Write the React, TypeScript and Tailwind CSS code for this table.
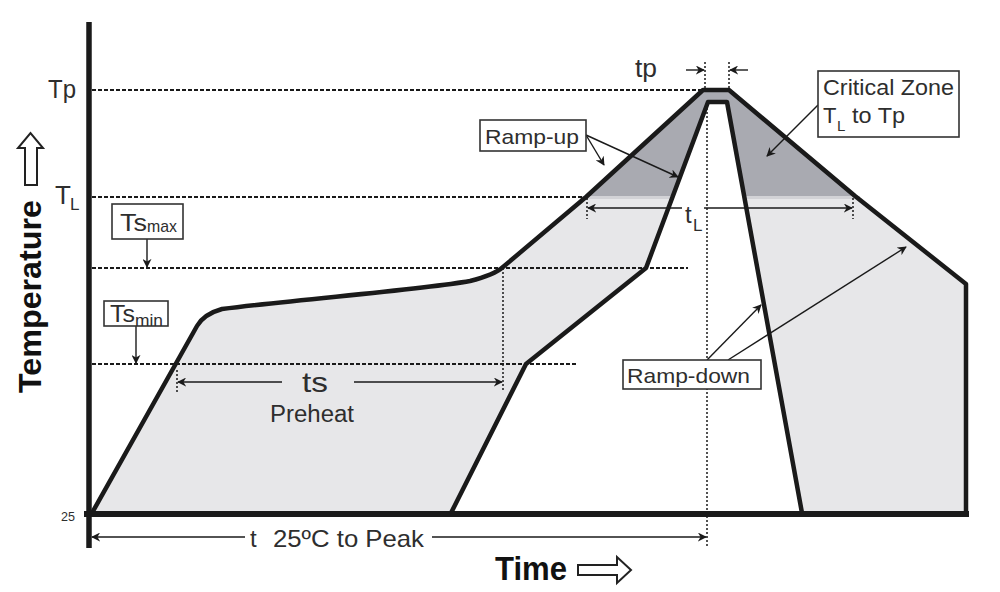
const INK = '#1a1a1a';
const TEXT = '#2e2e2e';
const FONT = '"Liberation Sans", Arial, sans-serif';

type Pt = [number, number];

function Arrow({ from, to }: { from: Pt; to: Pt }) {
  return (
    <line
      x1={from[0]}
      y1={from[1]}
      x2={to[0]}
      y2={to[1]}
      stroke={INK}
      strokeWidth={1.4}
      markerEnd="url(#head)"
    />
  );
}

function Dash({ x1, y1, x2, y2 }: { x1: number; y1: number; x2: number; y2: number }) {
  return <line x1={x1} y1={y1} x2={x2} y2={y2} stroke={INK} strokeWidth={2.2} strokeDasharray="4 2" />;
}

function Dot({ x, y1, y2 }: { x: number; y1: number; y2: number }) {
  return <line x1={x} y1={y1} x2={x} y2={y2} stroke={INK} strokeWidth={1.5} strokeDasharray="2 2" />;
}

function Box({ x, y, w, h }: { x: number; y: number; w: number; h: number }) {
  return <rect x={x} y={y} width={w} height={h} fill="#fff" stroke="#333" strokeWidth={1.6} />;
}

function Label({
  x,
  y,
  size,
  len,
  bold,
  children,
}: {
  x: number;
  y: number;
  size: number;
  len?: number;
  bold?: boolean;
  children: string;
}) {
  return (
    <text
      x={x}
      y={y}
      fontSize={size}
      fontFamily={FONT}
      fontWeight={bold ? 700 : 400}
      fill={bold ? '#111' : TEXT}
      textLength={len}
      lengthAdjust={len ? 'spacingAndGlyphs' : undefined}
    >
      {children}
    </text>
  );
}

const outer =
  'M 92 513 L 197 326 Q 204 314 222 309 C 300 299 420 290 470 281 Q 494 275 503 267 L 586 197 L 703 90 L 729 90 L 855 196 L 966 284 L 966 513 Z';
const outerStroke =
  'M 92 513 L 197 326 Q 204 314 222 309 C 300 299 420 290 470 281 Q 494 275 503 267 L 586 197 L 703 90 L 729 90 L 855 196 L 966 284 L 966 513';
const inner = 'M 451 513 L 526 364 L 646 268 L 708 102 L 727 102 L 802 513 Z';
const innerStroke = 'M 451 513 L 526 364 L 646 268 L 708 102 L 727 102 L 802 513';

export default function App() {
  return (
    <div className="w-[1000px] h-[592px] bg-white overflow-hidden">
      <svg width={1000} height={592} viewBox="0 0 1000 592" className="block">
        <defs>
          <marker id="head" viewBox="0 0 10 10" refX="9" refY="5" markerWidth="9" markerHeight="9" markerUnits="userSpaceOnUse" orient="auto">
            <path d="M0 0 L10 5 L0 10 L3 5 Z" fill={INK} />
          </marker>
          <clipPath id="critical">
            <rect x={0} y={0} width={1000} height={197} />
          </clipPath>
        </defs>

        {/* fills */}
        <path d={outer} fill="#e7e7e9" />
        <path d={outer} fill="#a9aab1" clipPath="url(#critical)" />
        <rect x={580} y={196} width={280} height={3} fill="#d2d2d6" />
        <path d={inner} fill="#fff" />

        {/* reference lines */}
        <Dash x1={92} y1={90} x2={703} y2={90} />
        <Dash x1={92} y1={197} x2={586} y2={197} />
        <Dash x1={92} y1={268} x2={688} y2={268} />
        <Dash x1={92} y1={364} x2={578} y2={364} />

        <Dot x={705} y1={62} y2={90} />
        <Dot x={729} y1={62} y2={90} />
        <Dot x={707} y1={104} y2={548} />
        <Dot x={503} y1={268} y2={390} />
        <Dot x={587} y1={198} y2={219} />
        <Dot x={853} y1={198} y2={219} />
        <Dot x={177} y1={370} y2={392} />

        {/* profile */}
        <path d={outerStroke} fill="none" stroke={INK} strokeWidth={4.5} strokeLinejoin="round" />
        <path d={innerStroke} fill="none" stroke={INK} strokeWidth={4.5} strokeLinejoin="round" />

        {/* axes */}
        <line x1={89} y1={22} x2={89} y2={548} stroke={INK} strokeWidth={5.5} />
        <line x1={84} y1={514} x2={969} y2={514} stroke={INK} strokeWidth={6} />

        {/* dimension arrows */}
        <Arrow from={[147, 239]} to={[147, 267]} />
        <Arrow from={[136, 326]} to={[136, 363]} />
        <Arrow from={[282, 382]} to={[178, 382]} />
        <Arrow from={[354, 382]} to={[502, 382]} />
        <Arrow from={[682, 208]} to={[588, 208]} />
        <Arrow from={[704, 208]} to={[852, 208]} />
        <Arrow from={[245, 537]} to={[92, 537]} />
        <Arrow from={[432, 537]} to={[706, 537]} />
        <Arrow from={[686, 70]} to={[704, 70]} />
        <Arrow from={[748, 70]} to={[730, 70]} />
        <Arrow from={[586, 135]} to={[604, 165]} />
        <Arrow from={[586, 135]} to={[678, 177]} />
        <Arrow from={[818, 105]} to={[767, 156]} />
        <Arrow from={[707, 360]} to={[761, 305]} />
        <Arrow from={[728, 360]} to={[906, 247]} />

        {/* label boxes */}
        <Box x={112} y={204} w={71} h={35} />
        <Box x={104} y={301} w={64} h={25} />
        <Box x={480} y={120} w={106} h={31} />
        <Box x={818} y={71} w={141} h={66} />
        <Box x={623} y={360} w={138} h={29} />

        {/* axis arrows */}
        <path d="M25 185 L25 148 L18 148 L30.5 133 L43 148 L37 148 L37 185 Z" fill="#fff" stroke="#222" strokeWidth={2} />
        <path d="M578 565 L617 565 L617 557 L631 570 L617 583 L617 575 L578 575 Z" fill="#fff" stroke="#222" strokeWidth={2} />

        {/* text */}
        <text
          transform="translate(41 393) rotate(-90)"
          fontSize={32}
          fontWeight={700}
          fontFamily={FONT}
          fill="#111"
          textLength={193}
          lengthAdjust="spacingAndGlyphs"
        >
          Temperature
        </text>
        <Label x={48} y={98} size={26} len={28}>Tp</Label>
        <Label x={55} y={204} size={26}>T</Label>
        <Label x={70} y={210} size={17}>L</Label>
        <Label x={61} y={521} size={13} len={14}>25</Label>

        <Label x={120} y={231} size={24} len={27}>Ts</Label>
        <Label x={147} y={232} size={17} len={30}>max</Label>
        <Label x={110} y={322} size={24} len={25}>Ts</Label>
        <Label x={135} y={326} size={17} len={28}>min</Label>

        <Label x={635} y={77} size={25} len={22}>tp</Label>
        <Label x={485} y={144} size={21} len={94}>Ramp-up</Label>
        <Label x={823} y={95} size={22} len={131}>Critical Zone</Label>
        <Label x={823} y={123} size={22}>T</Label>
        <Label x={837} y={131} size={15}>L</Label>
        <Label x={852} y={123} size={22} len={53}>to Tp</Label>
        <Label x={685} y={223} size={24}>t</Label>
        <Label x={693} y={231} size={17}>L</Label>
        <Label x={627} y={383} size={21} len={123}>Ramp-down</Label>

        <Label x={302} y={392} size={28} len={26}>ts</Label>
        <Label x={270} y={422} size={23} len={84}>Preheat</Label>

        <Label x={250} y={547} size={24}>t</Label>
        <Label x={273} y={547} size={24} len={151}>25ºC to Peak</Label>
        <Label x={495} y={580} size={33} len={72} bold>Time</Label>
      </svg>
    </div>
  );
}
